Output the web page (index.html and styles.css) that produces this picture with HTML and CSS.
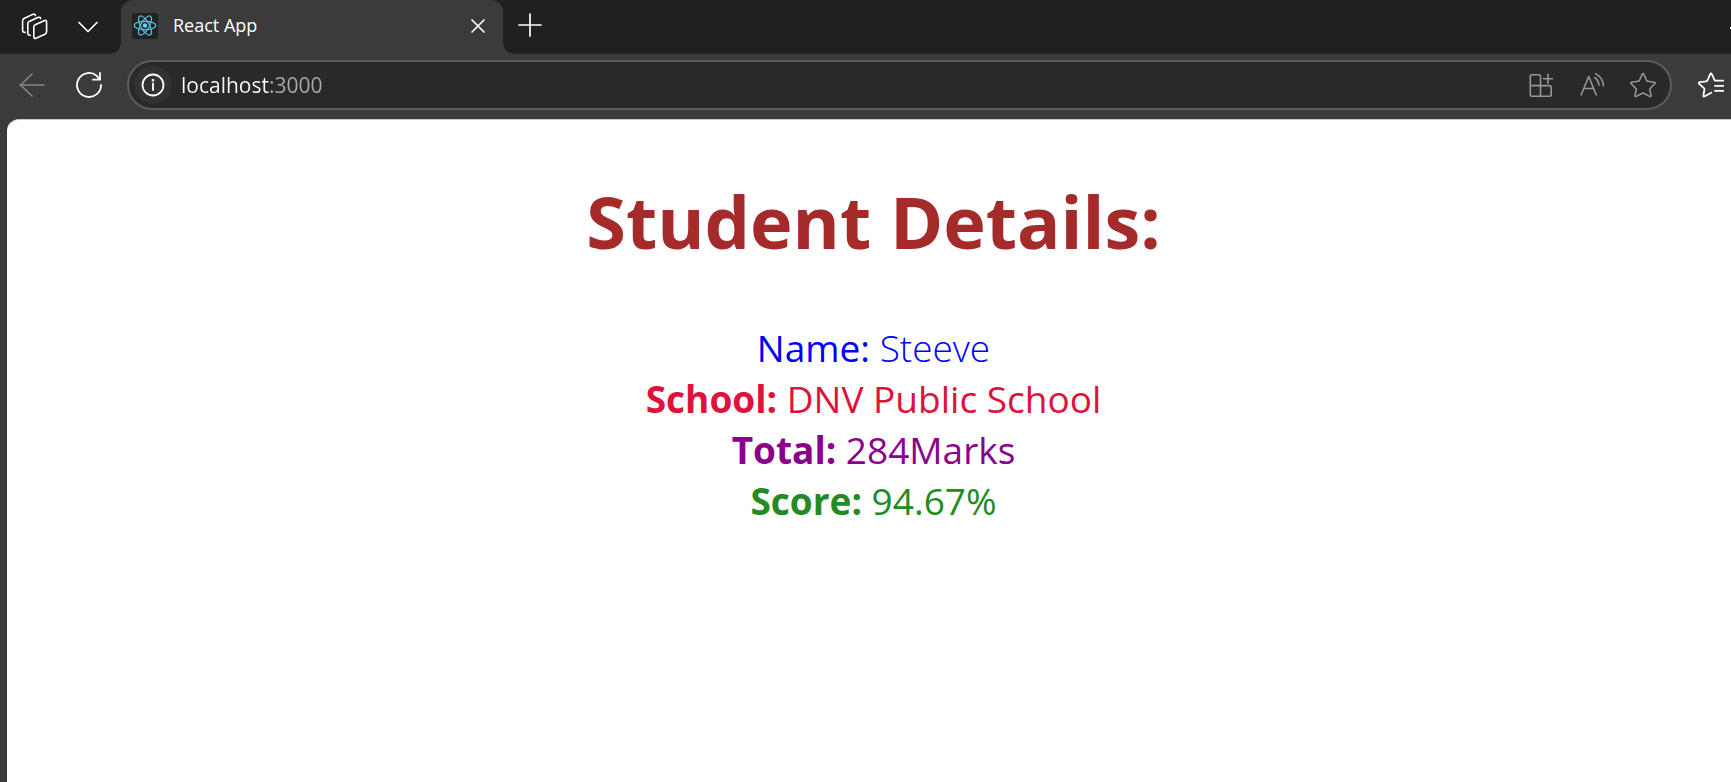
FILE: index.html
```html
<!DOCTYPE html>
<html lang="en">
<head>
<meta charset="utf-8">
<title>React App</title>
<link rel="stylesheet" href="styles.css">
</head>
<body>
<div class="browser">
  <header class="tab-strip">
    <div class="strip-tools">
      <button class="icon-button" aria-label="Workspaces">
        <svg width="28" height="28" viewBox="0 0 28 28" stroke-width="1.6"><path d="M14.2 11.8 23.6 7.6Q25.6 6.8 25.6 9V18.6Q25.6 20.4 24 21.2L15 25.2Q12.800 26 12.800 23.800V14Q12.800 12.500 14.200 11.800Z"/><path d="M9.200 22.300Q6.800 22.300 6.800 20V10.600Q6.800 9.200 8.200 8.500L16.800 4.500Q19 3.600 19.600 5.400"/><path d="M4.200 19.400Q1.600 19.600 1.600 17.200V7.600Q1.600 6.200 3 5.500L11.600 1.400Q13.800 .6 14.400 2.400"/></svg>
      </button>
      <button class="icon-button" aria-label="Tab actions">
        <svg width="22" height="22" viewBox="0 0 22 22" stroke-width="1.700"><path d="m2 6.500 9 9 9-9"/></svg>
      </button>
    </div>
    <div class="tab">
      <svg class="favicon" width="26" height="26" viewBox="0 0 26 26" stroke-width="1.200"><rect width="26" height="26" rx="3" fill="#212223" stroke="none"/><g stroke="#58c4dc"><ellipse cx="13" cy="12.500" rx="10.800" ry="4.200"/><ellipse cx="13" cy="12.500" rx="10.800" ry="4.200" transform="rotate(60 13 12.500)"/><ellipse cx="13" cy="12.500" rx="10.800" ry="4.200" transform="rotate(120 13 12.500)"/></g><circle cx="13" cy="12.500" r="2.200" fill="#61dafb" stroke="none"/></svg>
      <span class="tab-title">React App</span>
      <button class="icon-button" aria-label="Close tab">
        <svg width="16" height="16" viewBox="0 0 16 16" stroke-width="1.700"><path d="m2 2 12 12M14 2 2 14"/></svg>
      </button>
    </div>
    <button class="icon-button new-tab" aria-label="New tab">
      <svg width="24" height="24" viewBox="0 0 24 24" stroke-width="1.700"><path d="M12 1v22M1 12h22"/></svg>
    </button>
    <span class="minimize"></span>
  </header>
  <nav class="toolbar">
    <button class="icon-button back" aria-label="Back">
      <svg width="28" height="28" viewBox="0 0 28 28" stroke-width="1.700"><path d="M26 14H2M14 3 2.500 14 14 25"/></svg>
    </button>
    <button class="icon-button reload" aria-label="Refresh">
      <svg width="28" height="28" viewBox="0 0 28 28" stroke-width="1.800"><path d="M26 14A12 12 0 1 1 21.500 4.600L25 8.500M25 2V8.700H18"/></svg>
    </button>
    <div class="address-bar">
      <button class="icon-button site-info" aria-label="View site information">
        <svg width="24" height="24" viewBox="0 0 24 24" stroke-width="1.800"><circle cx="12" cy="12" r="10.500"/><path d="M12 10.500V17"/><circle cx="12" cy="7.300" r=".5"/></svg>
      </button>
      <input class="address" type="text" aria-label="Address" value="localhost:3000">
      <div class="address-tools">
        <button class="icon-button" aria-label="App available">
          <svg width="26" height="26" viewBox="0 0 26 26" stroke-width="1.600"><path d="M12.500 24.200V4.500Q12.500 2.800 10.800 2.800H4Q2.300 2.800 2.300 4.500V22.500Q2.300 24.200 4 24.200H21.500Q23.200 24.200 23.200 22.500V15.300Q23.200 13.600 21.500 13.600H2.300M20 2.200v9M15.500 6.700h9"/></svg>
        </button>
        <button class="icon-button" aria-label="Read aloud">
          <svg width="26" height="26" viewBox="0 0 26 26" stroke-width="1.600"><path d="M2.200 22.800 9.700 4.500 17.200 22.800M5 16.500h9.500M15.700 5.500Q19.500 8 20 13.200M16.500 1.600Q23.500 5 24.600 13.800"/></svg>
        </button>
        <button class="icon-button" aria-label="Add to favorites">
          <svg width="26" height="26" viewBox="0 0 26 26" stroke-width="1.600"><path d="M12.200 2.200Q13 .7 13.800 2.200L16.600 8.500Q17 9.200 17.700 9.300L24.300 10.200Q25.900 10.600 24.800 11.800L20.300 16.200Q19.700 16.800 19.800 17.500L21 23.400Q21.100 25 19.700 24.400L13.800 21.200Q13 20.800 12.200 21.200L6.300 24.400Q4.900 25 5 23.400L6.200 17.500Q6.300 16.800 5.700 16.200L1.200 11.800Q.1 10.600 1.700 10.200L8.300 9.300Q9 9.200 9.400 8.500Z"/></svg>
        </button>
      </div>
    </div>
    <button class="icon-button favorites" aria-label="Favorites">
      <svg width="26" height="26" viewBox="0 0 26 26" stroke-width="1.800"><path d="M13.200 20.800 6.700 24.300Q5.200 25 5.400 23.400L6.400 17.500Q6.500 16.800 5.900 16.200L1.200 11.800Q.1 10.600 1.700 10.200L8.300 9.300Q9 9.200 9.400 8.500L12.200 2.200Q13 .7 13.800 2.200L16.900 8.700H25.300M17 13.800h8.300M17 18.900h8.300"/></svg>
    </button>
  </nav>
  <main class="page">
    <h1 class="title">Student Details:</h1>
    <div class="details">
      <div class="row name"><b>Name:</b> <span>Steeve</span></div>
      <div class="row school"><b>School:</b> <span>DNV Public School</span></div>
      <div class="row total"><b>Total:</b> <span>284Marks</span></div>
      <div class="row score"><b>Score:</b> <span>94.67%</span></div>
    </div>
  </main>
</div>
</body>
</html>
```
FILE: styles.css
```css
* { box-sizing: border-box; }

body {
  margin: 0;
  background: #3b3b3b;
  color: #fff;
  font-family: "Open Sans", "Noto Sans", sans-serif;
}

.browser {
  display: flex;
  flex-direction: column;
  min-height: 100vh;
  overflow: hidden;
}

svg {
  display: block;
  flex: none;
  fill: none;
  stroke: currentColor;
  stroke-linecap: round;
  stroke-linejoin: round;
}

.icon-button {
  display: flex;
  align-items: center;
  justify-content: center;
  flex: none;
  padding: 0;
  border: 0;
  background: none;
  color: #fff;
}

.tab-strip {
  display: flex;
  height: 54px;
  background: linear-gradient(#202020 50%, #3b3b3b 50%);
}

.strip-tools {
  display: flex;
  align-items: center;
  gap: 28px;
  width: 121px;
  padding-left: 21px;
  background: #202020;
  border-bottom-right-radius: 12px;
}

.tab {
  display: flex;
  align-items: center;
  width: 382px;
  padding: 0 17px 2px 11px;
  background: #3b3b3b;
  border-radius: 12px 12px 0 0;
}

.tab-title {
  flex: 1;
  padding: 0 0 2px 15px;
  font-size: 18px;
}

.new-tab {
  width: 54px;
  padding-bottom: 5px;
  background: #202020;
  border-bottom-left-radius: 12px;
}

.minimize {
  flex: 1;
  background: linear-gradient(#fff, #fff) right 27px / 1px 2px no-repeat #202020;
}

.toolbar {
  display: flex;
  align-items: center;
  height: 65px;
  padding: 0 7px 4px 18px;
}

.back { color: #858585; }

.reload { margin: 0 24px 0 29px; }

.address-bar {
  display: flex;
  align-items: center;
  flex: 1;
  height: 50px;
  padding: 0 14px 0 5px;
  border: 2px solid #5c5c5c;
  border-radius: 25px;
  background: #292929;
}

.site-info {
  width: 38px;
  height: 38px;
  border-radius: 50%;
  background: #323232;
}

.address {
  flex: 1;
  min-width: 0;
  padding: 0 0 0 9px;
  border: 0;
  outline: 0;
  background: linear-gradient(90deg, #fff 98px, #aaa 98px);
  background-clip: text;
  -webkit-background-clip: text;
  color: transparent;
  font: 21px "Open Sans", "Noto Sans", sans-serif;
}

.address-tools {
  display: flex;
  gap: 25px;
}

.address-tools .icon-button { color: #969696; }

.favorites { margin-left: 26px; }

.page {
  flex: 1;
  margin-left: 7px;
  padding: 50px 0 0 9px;
  background: #fff;
  border-top: 1px solid #c8c8c8;
  border-top-left-radius: 12px;
  text-align: center;
}

.title {
  margin: 0 0 50px;
  color: brown;
  font-size: 72px;
  line-height: 102px;
}

.row {
  font-size: 37px;
  line-height: 51px;
}

.name { color: blue; font-weight: 300; }
.name b { font-weight: 400; }
.school { color: crimson; }
.total { color: darkmagenta; }
.score { color: forestgreen; }
```
